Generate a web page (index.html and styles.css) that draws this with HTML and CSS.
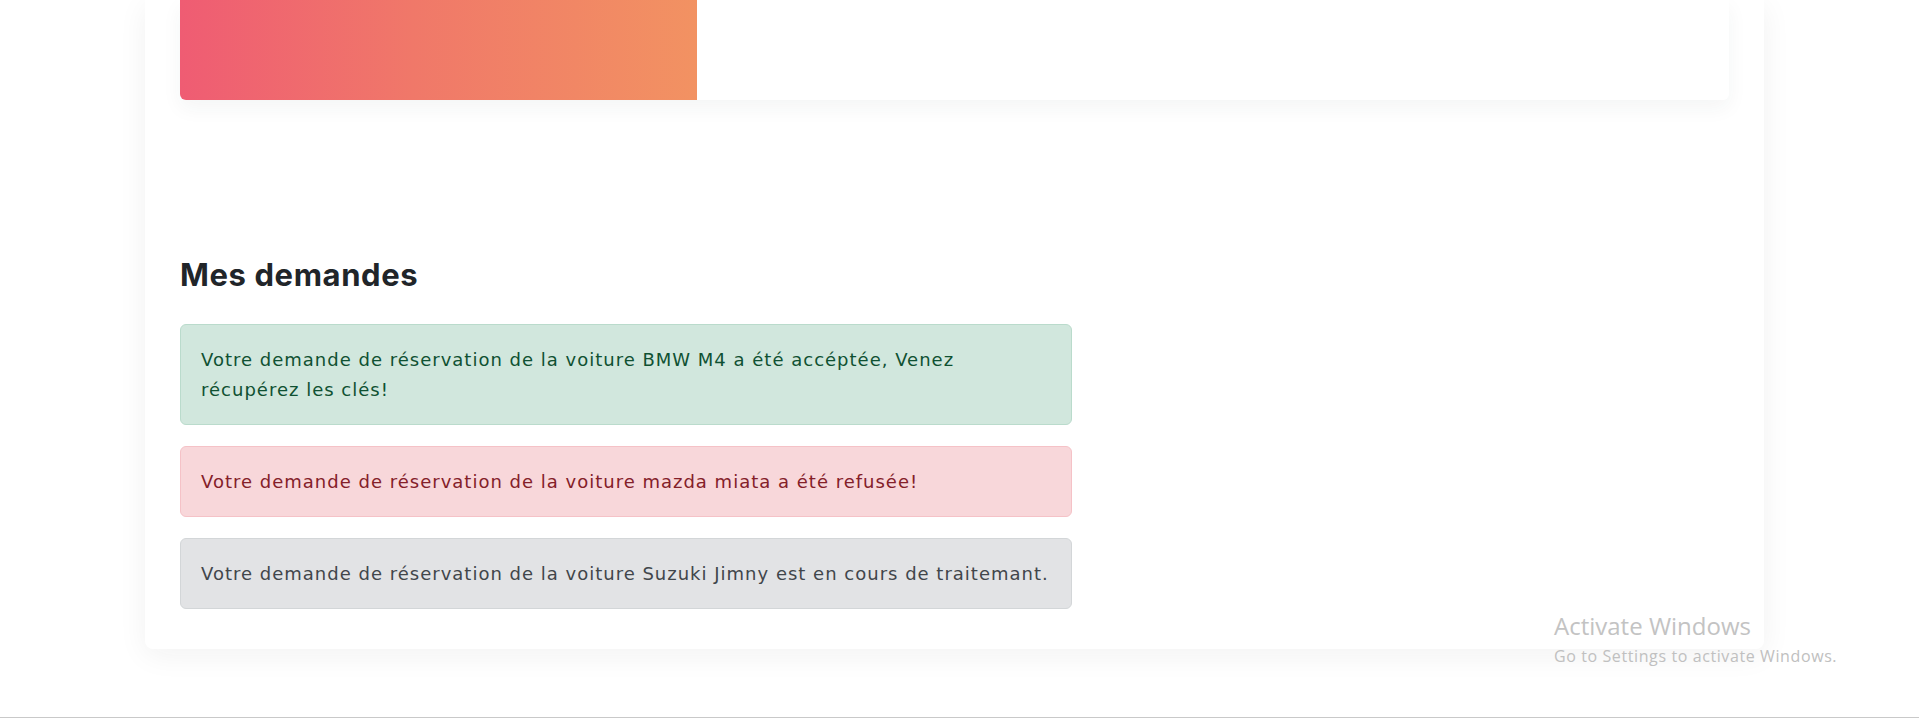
FILE: index.html
```html
<!DOCTYPE html>
<html lang="fr">
<head>
<meta charset="utf-8">
<title>Mes demandes</title>
<link rel="stylesheet" href="styles.css">
</head>
<body>
<div class="page">
  <main class="panel">
    <section class="hero-card">
      <div class="hero-gradient"></div>
      <div class="hero-body"></div>
    </section>
    <section class="requests">
      <h2 class="requests-title">Mes demandes</h2>
      <div class="alert-list">
        <div class="alert alert-success">Votre demande de réservation de la voiture BMW M4 a été accéptée, Venez récupérez les clés!</div>
        <div class="alert alert-danger">Votre demande de réservation de la voiture mazda miata a été refusée!</div>
        <div class="alert alert-secondary">Votre demande de réservation de la voiture Suzuki Jimny est en cours de traitemant.</div>
      </div>
    </section>
  </main>
</div>
<div class="watermark">
  <div class="wm-title">Activate Windows</div>
  <div class="wm-sub">Go to Settings to activate Windows.</div>
</div>
</body>
</html>
```

FILE: styles.css
```css
html, body {
  margin: 0;
  padding: 0;
  background: #ffffff;
}

body {
  font-family: "Inter", "Noto Sans", sans-serif;
  color: #212529;
  height: 718px;
  overflow: hidden;
  position: relative;
  box-sizing: border-box;
  border-bottom: 1px solid #c9c9c9;
}

.page {
  padding-left: 145px;
}

.panel {
  width: 1619px;
  box-sizing: border-box;
  background: #ffffff;
  border-radius: 0 0 8px 8px;
  box-shadow: 0 6px 30px rgba(30, 40, 40, 0.06);
  padding: 0 35px 40px;
}

.hero-card {
  height: 100px;
  display: flex;
  background: #ffffff;
  border-radius: 0 0 6px 6px;
  overflow: hidden;
  box-shadow: 0 8px 20px rgba(30, 50, 50, 0.05);
}

.hero-gradient {
  width: 517px;
  background: linear-gradient(90deg, #ef5c73 0%, #f07869 45%, #f29262 100%);
}

.hero-body {
  flex: 1;
}

.requests {
  padding-top: 157px;
  width: 892px;
}

.requests-title {
  margin: 0 0 31px;
  font-size: 31px;
  line-height: 36px;
  font-weight: 700;
  letter-spacing: 0.6px;
  color: #212529;
}

.alert-list {
  display: flex;
  flex-direction: column;
  gap: 20.5px;
}

.alert {
  border: 1px solid transparent;
  border-radius: 6px;
  padding: 20px 20px 20px 20px;
  font-family: "DejaVu Sans", "Inter", sans-serif;
  font-size: 18px;
  line-height: 29.5px;
  letter-spacing: 1px;
}

.alert-success {
  background: #d1e7dd;
  border-color: #badbcc;
  color: #0f5132;
  padding-right: 60px;
}

.alert-danger {
  background: #f8d7da;
  border-color: #f5c2c7;
  color: #842029;
}

.alert-secondary {
  background: #e2e3e5;
  border-color: #d3d6d8;
  color: #41464b;
}

.watermark {
  position: absolute;
  left: 1554px;
  top: 610px;
  font-family: "Open Sans", "Noto Sans", sans-serif;
  pointer-events: none;
}

.wm-title {
  font-size: 24px;
  line-height: 32px;
  color: #c3c3c3;
}

.wm-sub {
  font-size: 16px;
  line-height: 28px;
  letter-spacing: 0.6px;
  color: #c0c0c0;
}
```
